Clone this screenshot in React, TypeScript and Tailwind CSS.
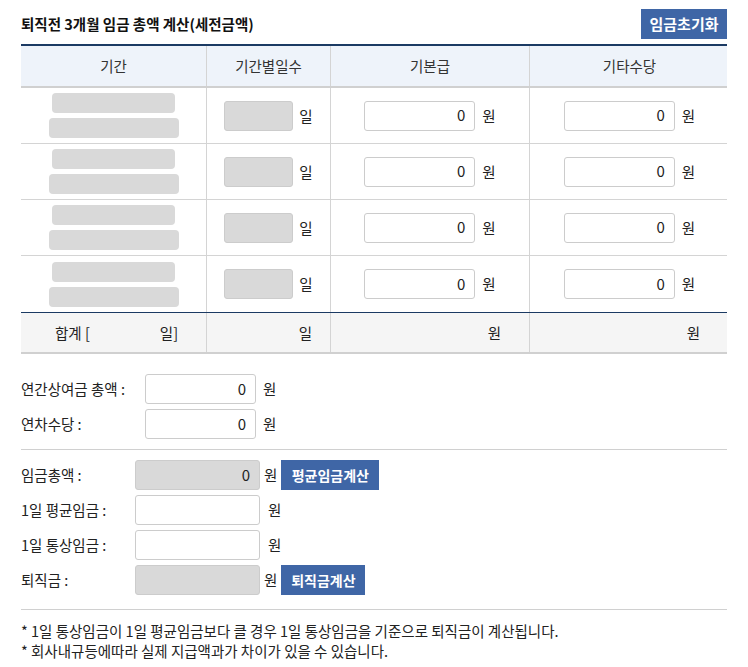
import React from "react";

const font = { fontFamily: '"Noto Sans CJK KR", "Noto Sans", sans-serif' };

function Box({ value = "", gray = false, className = "" }: { value?: string; gray?: boolean; className?: string }) {
  return (
    <div
      className={
        "h-[30px] rounded-[3px] border border-[#cccccc] flex items-center justify-end pr-[9px] text-[15px] text-[#222] " +
        (gray ? "bg-[#d9d9d9] " : "bg-white ") +
        className
      }
    >
      {value}
    </div>
  );
}

function DataRow({ last = false }: { last?: boolean }) {
  return (
    <div className={"grid grid-cols-[186px_124px_199px_199px] h-[56px] " + (last ? "" : "border-b border-[#d4d4d4]")}>
      <div className="flex flex-col items-center justify-center gap-[5px] border-r border-[#d4d4d4]">
        <div className="w-[123px] h-[20px] rounded-[4px] bg-[#d9d9d9]" />
        <div className="w-[130px] h-[20px] rounded-[4px] bg-[#d9d9d9]" />
      </div>
      <div className="flex items-center justify-center gap-[6px] border-r border-[#d4d4d4]">
        <Box gray className="w-[69px]" />
        <span>일</span>
      </div>
      <div className="flex items-center justify-center gap-[7px] border-r border-[#d4d4d4]">
        <Box value="0" className="w-[111px]" />
        <span>원</span>
      </div>
      <div className="flex items-center justify-center gap-[7px]">
        <Box value="0" className="w-[111px]" />
        <span>원</span>
      </div>
    </div>
  );
}

function Btn({ children, w }: { children: React.ReactNode; w: string }) {
  return (
    <button className={"h-[30px] bg-[#3f66a6] text-white font-bold text-[14px] ml-[4px] " + w}>
      {children}
    </button>
  );
}

export default function App() {
  return (
    <div className="w-[748px] bg-white text-[14.5px] text-[#222]" style={font}>
      <div className="px-[21px] pt-[9px]">
        <div className="flex items-center justify-between h-[30px]">
          <h2 className="text-[14.5px] font-bold text-[#111]">퇴직전 3개월 임금 총액 계산(세전금액)</h2>
          <button className="h-[30px] w-[86px] bg-[#3f66a6] text-white font-bold text-[15px]">임금초기화</button>
        </div>

        <div className="mt-[5px] border-t-2 border-[#1b3a63]">
          <div className="grid grid-cols-[186px_124px_199px_199px] h-[42px] bg-[#eef3fa] border-b-2 border-[#d0d0d0] text-[#333]">
            <div className="flex items-center justify-center border-r border-[#d4d4d4]">기간</div>
            <div className="flex items-center justify-center border-r border-[#d4d4d4]">기간별일수</div>
            <div className="flex items-center justify-center border-r border-[#d4d4d4]">기본급</div>
            <div className="flex items-center justify-center">기타수당</div>
          </div>
          <DataRow />
          <DataRow />
          <DataRow />
          <DataRow last />
          <div className="grid grid-cols-[186px_124px_199px_199px] h-[42px] bg-[#f5f5f5] border-t border-[#1b3a63] border-b-2 border-b-[#d0d0d0]">
            <div className="flex items-center pl-[34px] border-r border-[#d4d4d4]">
              <span>합계 [</span>
              <span className="ml-[70px]">일]</span>
            </div>
            <div className="flex items-center justify-end pr-[18px] border-r border-[#d4d4d4]">일</div>
            <div className="flex items-center justify-end pr-[28px] border-r border-[#d4d4d4]">원</div>
            <div className="flex items-center justify-end pr-[29px]">원</div>
          </div>
        </div>

        <div className="pt-[20px] pb-[10px] flex flex-col gap-[5px] border-b border-[#d0d0d0]">
          <div className="flex items-center">
            <span className="w-[124px]">연간상여금 총액 :</span>
            <Box value="0" className="w-[111px]" />
            <span className="ml-[7px]">원</span>
          </div>
          <div className="flex items-center">
            <span className="w-[124px]">연차수당 :</span>
            <Box value="0" className="w-[111px]" />
            <span className="ml-[7px]">원</span>
          </div>
        </div>

        <div className="pt-[10px] pb-[14px] flex flex-col gap-[5px] border-b border-[#d0d0d0]">
          <div className="flex items-center">
            <span className="w-[114px]">임금총액 :</span>
            <Box value="0" gray className="w-[125px]" />
            <span className="ml-[4px]">원</span>
            <Btn w="w-[98px]">평균임금계산</Btn>
          </div>
          <div className="flex items-center">
            <span className="w-[114px]">1일 평균임금 :</span>
            <Box className="w-[125px]" />
            <span className="ml-[8px]">원</span>
          </div>
          <div className="flex items-center">
            <span className="w-[114px]">1일 통상임금 :</span>
            <Box className="w-[125px]" />
            <span className="ml-[8px]">원</span>
          </div>
          <div className="flex items-center">
            <span className="w-[114px]">퇴직금 :</span>
            <Box gray className="w-[125px]" />
            <span className="ml-[4px]">원</span>
            <Btn w="w-[84px]">퇴직금계산</Btn>
          </div>
        </div>

        <div className="pt-[11px] leading-[20px]">
          <p>* 1일 통상임금이 1일 평균임금보다 클 경우 1일 통상임금을 기준으로 퇴직금이 계산됩니다.</p>
          <p>* 회사내규등에따라 실제 지급액과가 차이가 있을 수 있습니다.</p>
        </div>
      </div>
    </div>
  );
}
